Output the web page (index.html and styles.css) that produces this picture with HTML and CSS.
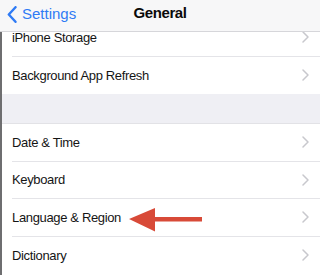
FILE: index.html
```html
<!DOCTYPE html>
<html>
<head>
<meta charset="utf-8">
<link rel="stylesheet" href="styles.css">
</head>
<body>
<div class="screen">
  <header class="nav">
    <div class="back">
      <svg class="back-icon" width="10" height="17" viewBox="0 0 10 17"><path d="M8.5 1.2 L1.8 8.5 L8.5 15.8" fill="none" stroke="#2f7bf5" stroke-width="2.4" stroke-linecap="round" stroke-linejoin="round"/></svg>
      <span class="back-label">Settings</span>
    </div>
    <div class="title">General</div>
  </header>
  <div class="viewport">
    <div class="list">
      <div class="group">
        <div class="row"><div class="row-inner"><span>iPhone Storage</span><svg class="chev" width="7" height="12" viewBox="0 0 7 12"><path d="M1 1 L6 6 L1 11" fill="none" stroke="#c8c8cd" stroke-width="1.5" stroke-linecap="round" stroke-linejoin="round"/></svg></div></div>
        <div class="row last"><div class="row-inner"><span>Background App Refresh</span><svg class="chev" width="7" height="12" viewBox="0 0 7 12"><path d="M1 1 L6 6 L1 11" fill="none" stroke="#c8c8cd" stroke-width="1.5" stroke-linecap="round" stroke-linejoin="round"/></svg></div></div>
      </div>
      <div class="gap"></div>
      <div class="group">
        <div class="row"><div class="row-inner"><span>Date &amp; Time</span><svg class="chev" width="7" height="12" viewBox="0 0 7 12"><path d="M1 1 L6 6 L1 11" fill="none" stroke="#c8c8cd" stroke-width="1.5" stroke-linecap="round" stroke-linejoin="round"/></svg></div></div>
        <div class="row"><div class="row-inner"><span>Keyboard</span><svg class="chev" width="7" height="12" viewBox="0 0 7 12"><path d="M1 1 L6 6 L1 11" fill="none" stroke="#c8c8cd" stroke-width="1.5" stroke-linecap="round" stroke-linejoin="round"/></svg></div></div>
        <div class="row annotated"><div class="row-inner"><span>Language &amp; Region</span><svg class="chev" width="7" height="12" viewBox="0 0 7 12"><path d="M1 1 L6 6 L1 11" fill="none" stroke="#c8c8cd" stroke-width="1.5" stroke-linecap="round" stroke-linejoin="round"/></svg></div>
          <svg class="arrow" width="74" height="26" viewBox="0 0 74 26"><polygon points="0,12 26,1 26,10 73,10 73,14.5 26,14.5 26,24.5" fill="#d84a38"/></svg>
        </div>
        <div class="row last"><div class="row-inner"><span>Dictionary</span><svg class="chev" width="7" height="12" viewBox="0 0 7 12"><path d="M1 1 L6 6 L1 11" fill="none" stroke="#c8c8cd" stroke-width="1.5" stroke-linecap="round" stroke-linejoin="round"/></svg></div></div>
      </div>
    </div>
  </div>
</div>
</body>
</html>
```
FILE: styles.css
```css
* { box-sizing: border-box; }
html, body { margin: 0; padding: 0; }
body {
  width: 320px;
  height: 275px;
  overflow: hidden;
  background: #ffffff;
  font-family: "Liberation Sans", Arial, sans-serif;
}
.screen {
  display: flex;
  flex-direction: column;
  height: 275px;
}
.nav {
  position: relative;
  height: 32px;
  flex: none;
  background: #f7f7f8;
  border-bottom: 1px solid #d6d6da;
  display: flex;
  align-items: center;
  padding: 0 0 4px 7px;
}
.back {
  display: flex;
  align-items: center;
  gap: 5px;
  color: #2f7bf5;
}
.back-icon { display: block; margin-top: 2px; }
.back-label {
  font-size: 15px;
  line-height: 18px;
}
.title {
  position: absolute;
  left: 0;
  right: 0;
  top: 4px;
  text-align: center;
  font-size: 15px;
  font-weight: bold;
  letter-spacing: -0.4px;
  color: #0a0a0a;
  line-height: 18px;
  pointer-events: none;
}
.viewport {
  flex: 1;
  overflow: hidden;
  border-left: 2px solid #6e6e70;
}
.list {
  margin-top: -12.8px;
}
.group { background: #ffffff; }
.gap {
  height: 30px;
  background: #efeff4;
  border-bottom: 1px solid #e2e2e6;
}
.row {
  position: relative;
  height: 37.5px;
  padding-left: 10px;
  display: flex;
}
.row-inner {
  flex: 1;
  display: flex;
  align-items: center;
  justify-content: space-between;
  padding-right: 11px;
  border-bottom: 1px solid #e4e4e8;
  font-size: 13px;
  letter-spacing: -0.35px;
  color: #151515;
}
.row.last .row-inner { border-bottom: none; }
.chev { display: block; flex: none; }
.arrow {
  position: absolute;
  left: 127px;
  top: 8px;
  display: block;
}
```
